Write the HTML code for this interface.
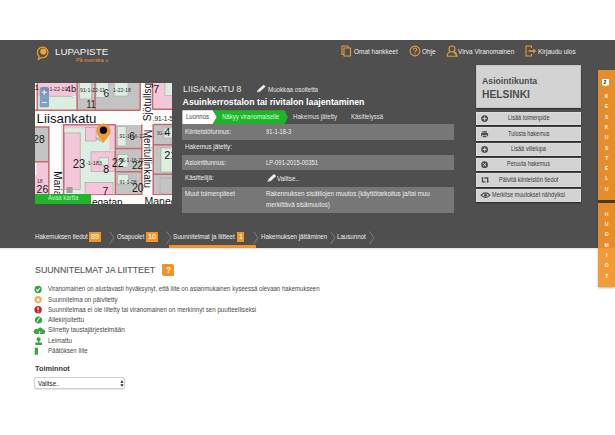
<!DOCTYPE html>
<html><head><meta charset="utf-8"><style>
html,body{margin:0;padding:0;background:#fff;}
body{width:615px;height:435px;position:relative;overflow:hidden;font-family:"Liberation Sans",sans-serif;}
.t{position:absolute;white-space:nowrap;line-height:1;}
.r{position:absolute;}
svg text{font-family:"Liberation Sans",sans-serif;}
</style></head><body>
<div class="r" style="left:0.00px;top:40.00px;width:615.00px;height:207.50px;background:#4f4f4f;"></div>
<div class="r" style="left:0.00px;top:247.50px;width:615.00px;height:2.00px;background:linear-gradient(rgba(0,0,0,0.12),rgba(0,0,0,0));"></div>
<svg class="r" style="left:36px;top:44px" width="14" height="17" viewBox="0 0 14 17">
<path d="M3.2 12.4 A5.3 5.3 0 1 1 5.6 13.6 L2.2 15.6 Z" fill="none" stroke="#eea12e" stroke-width="1.2" stroke-linejoin="round"/>
<circle cx="7.3" cy="7.6" r="3.1" fill="#f3a32c"/>
</svg>
<div class="t" id="logo" style="left:54.50px;top:47.22px;font-size:9.90px;color:#f4f4f4;transform:scaleX(0.9919);transform-origin:0 0;">LUPAPISTE</div>
<div class="t" id="sv" style="left:75.60px;top:57.32px;font-size:6.00px;color:#e8913a;transform:scaleX(0.8939);transform-origin:0 0;">På svenska »</div>
<svg class="r" style="left:341px;top:45px" width="12" height="12" viewBox="0 0 12 12">
<path d="M1 1 H7 V9.5 H1 Z" fill="none" stroke="#e39a3c" stroke-width="1.1"/>
<path d="M3 3 H9.5 V11 H3 Z" fill="#4f4f4f" stroke="#e39a3c" stroke-width="1.1"/>
</svg>
<div class="t" id="nav1" style="left:354.20px;top:47.83px;font-size:7.40px;color:#eeeeee;transform:scaleX(0.8728);transform-origin:0 0;">Omat hankkeet</div>
<svg class="r" style="left:409px;top:44.5px" width="12" height="12" viewBox="0 0 12 12">
<circle cx="6" cy="6" r="4.9" fill="none" stroke="#e39a3c" stroke-width="1.1"/>
<path d="M4.3 4.6 Q4.4 3 6 3 Q7.7 3 7.7 4.5 Q7.7 5.5 6.6 6 Q6 6.3 6 7.3" fill="none" stroke="#e39a3c" stroke-width="1.1"/>
<circle cx="6" cy="8.8" r="0.7" fill="#e39a3c"/>
</svg>
<div class="t" id="nav2" style="left:421.60px;top:47.83px;font-size:7.40px;color:#eeeeee;transform:scaleX(0.8700);transform-origin:0 0;">Ohje</div>
<svg class="r" style="left:446px;top:44.5px" width="12" height="12" viewBox="0 0 12 12">
<circle cx="6" cy="4" r="3" fill="none" stroke="#e39a3c" stroke-width="1.1"/>
<path d="M1 11.2 Q1.5 7.4 4.3 6.8 M7.7 6.8 Q10.5 7.4 11 11.2 Z M1 11.2 H11" fill="none" stroke="#e39a3c" stroke-width="1.1"/>
</svg>
<div class="t" id="nav3" style="left:457.70px;top:47.83px;font-size:7.40px;color:#eeeeee;transform:scaleX(0.8754);transform-origin:0 0;">Virva Viranomainen</div>
<svg class="r" style="left:525px;top:45px" width="12" height="12" viewBox="0 0 12 12">
<path d="M6.5 3.2 V1 H1 V11 H6.5 V8.8" fill="none" stroke="#e39a3c" stroke-width="1.1"/>
<path d="M3.5 6 H9" stroke="#e39a3c" stroke-width="1.6"/>
<path d="M8.2 3.5 L11.2 6 L8.2 8.5 Z" fill="#e39a3c"/>
</svg>
<div class="t" id="nav4" style="left:537.70px;top:47.83px;font-size:7.40px;color:#eeeeee;transform:scaleX(0.8812);transform-origin:0 0;">Kirjaudu ulos</div>
<svg class="r" style="left:35px;top:83px" width="137" height="121" viewBox="35 83 137 121"><rect x="35" y="83" width="137.00" height="121.00" fill="#fcfcfc"/><rect x="37.3" y="83" width="39.70" height="13.20" fill="#f3c6d9"/><rect x="37.3" y="96.2" width="39.70" height="14.00" fill="#dcede1"/><path d="M49 96.3 H71 L73 98" stroke="#a8a8a8" stroke-width="0.8" fill="none"/><rect x="77" y="83" width="63.20" height="27.20" fill="#c3c3c3"/><rect x="79.7" y="82" width="11.70" height="17.00" fill="#dcede1" stroke="#a8a8a8" stroke-width="0.6"/><rect x="96" y="82" width="12.50" height="15.50" fill="#dcede1" stroke="#a8a8a8" stroke-width="0.6"/><rect x="114.2" y="82" width="13.80" height="14.00" fill="#dcede1" stroke="#a8a8a8" stroke-width="0.6"/><rect x="152.5" y="83" width="19.50" height="26.30" fill="#f3c6d9"/><rect x="165" y="82" width="8.00" height="13.60" fill="#dcede1" stroke="#a8a8a8" stroke-width="0.6"/><path d="M35 110.3 H140.2 M152.5 109.3 H172 M37.3 83 V110.3 M77.1 83 V110.3 M95.1 83 V110.3 M140.2 83 V110.3 M152.5 83 V109.3" stroke="#c66a70" stroke-width="1.5" fill="none"/><rect x="35" y="127" width="14.20" height="34.80" fill="#c3c3c3"/><rect x="35" y="161.8" width="14.20" height="33.20" fill="#f3c6d9"/><rect x="35" y="161" width="1.50" height="14.00" fill="#f4f4f4"/><rect x="64.3" y="125.4" width="50.60" height="69.60" fill="#dcede1"/><rect x="64.3" y="125.4" width="50.60" height="2.90" fill="#f3c6d9"/><rect x="64.3" y="133" width="15.90" height="56.50" fill="#f3c6d9" stroke="#a8a8a8" stroke-width="0.7"/><rect x="85.4" y="127.5" width="10.70" height="13.50" fill="#f3c6d9" stroke="#a8a8a8" stroke-width="0.7"/><rect x="109.3" y="125.4" width="5.60" height="24.60" fill="#f3c6d9"/><rect x="91" y="151.8" width="23.90" height="19.80" fill="#f3c6d9" stroke="#a8a8a8" stroke-width="0.7"/><rect x="99" y="157.6" width="9.70" height="7.40" fill="#dcede1" stroke="#a8a8a8" stroke-width="0.6"/><rect x="85.1" y="182.6" width="27.90" height="12.50" fill="#f3c6d9" stroke="#a8a8a8" stroke-width="0.7"/><rect x="66.6" y="187" width="6.00" height="6.00" fill="#9e9e9e"/><rect x="116" y="125" width="25.80" height="69.80" fill="#c3c3c3"/><rect x="117.2" y="126.5" width="8.80" height="19.50" fill="#dcede1" stroke="#a8a8a8" stroke-width="0.6"/><rect x="117.6" y="154.6" width="10.40" height="12.60" fill="#dcede1" stroke="#a8a8a8" stroke-width="0.6"/><rect x="117.6" y="174.7" width="11.00" height="9.80" fill="#dcede1" stroke="#a8a8a8" stroke-width="0.6"/><rect x="153.2" y="124.5" width="18.80" height="70.30" fill="#c3c3c3"/><rect x="164" y="128" width="9.00" height="10.00" fill="#dcede1" stroke="#a8a8a8" stroke-width="0.6"/><rect x="161" y="148" width="12.00" height="24.00" fill="#dcede1" stroke="#a8a8a8" stroke-width="0.6"/><rect x="160" y="178" width="13.00" height="16.00" fill="#c3c3c3" stroke="#a8a8a8" stroke-width="0.6"/><path d="M35 126.9 H49.5 M48.8 126 V195 M35 161.8 H49.2 M63.6 124 V195 M64 124.7 H115.5 M115.4 124.5 V195 M141.8 124.5 V195 M116 148.5 H141.8 M116 171.8 H141.8 M116 194.8 H141.8 M153.2 124 V195 M153.2 124.6 H172 M153.2 144.8 H172 M153.2 174.3 H172 M153.2 194.8 H172 M64 195 H115" stroke="#c66a70" stroke-width="1.5" fill="none"/><path d="M62 124 V195" stroke="#d8d8d8" stroke-width="1"/><text x="36.6" y="122.5" font-size="13.3" fill="#141414" >Liisankatu</text><text x="34.6" y="90" font-size="8" fill="#222" >1</text><text x="42" y="91" font-size="5.2" fill="#333" >91-1-22-10</text><text x="65.8" y="91.8" font-size="9.2" fill="#1a1a1a" >4b</text><text x="80" y="92.3" font-size="5.2" fill="#333" >91-1-22-11</text><text transform="translate(103.5,96.8) scale(0.9,1)" font-size="11" fill="#222" >6</text><text x="113" y="92.3" font-size="5.2" fill="#333" >1-22-18</text><text transform="translate(86.5,108.1) scale(0.75,1)" font-size="11.5" fill="#1a1a1a" >11</text><text x="153.2" y="92.6" font-size="10.8" fill="#1a1a1a" >7</text><text x="152.6" y="121" font-size="6.5" fill="#1a1a1a" >.91-1-5</text><text transform="translate(33.2,143.4) scale(0.88,1)" font-size="11.8" fill="#1a1a1a" >28</text><text x="37" y="183.2" font-size="5" fill="#333" >18</text><text transform="translate(36.6,192.6) scale(0.92,1)" font-size="11.4" fill="#1a1a1a" >26</text><text transform="translate(72.8,168) scale(0.9,1)" font-size="12.4" fill="#1a1a1a" >23</text><text x="86" y="165" font-size="5.5" fill="#333" >-1-183</text><text x="103.3" y="173.2" font-size="10.5" fill="#1a1a1a" >8</text><text transform="translate(111.8,167.2) scale(0.88,1)" font-size="12" fill="#1a1a1a" >22</text><text transform="translate(131.9,169) scale(0.85,1)" font-size="11.5" fill="#1a1a1a" >22</text><text transform="translate(131.9,192.2) scale(0.88,1)" font-size="12" fill="#1a1a1a" >20</text><text x="102.6" y="195.1" font-size="10.5" fill="#1a1a1a" >7</text><text transform="translate(129.2,140.3) scale(0.9,1)" font-size="11.5" fill="#1a1a1a" >6</text><text x="118" y="138" font-size="5.2" fill="#333" >.91-1-16-12</text><text x="118" y="162" font-size="5" fill="#333" >.91-1-16-22</text><text x="118" y="183.8" font-size="5" fill="#333" >.91-1-28</text><text x="164.2" y="136" font-size="11" fill="#1a1a1a" >4</text><text x="157" y="135" font-size="5" fill="#333" >91-1-</text><text x="164.2" y="158.6" font-size="11" fill="#1a1a1a" >21</text><text x="0" y="0" font-size="10.2" fill="#141414" transform="translate(150.8,121.3) rotate(-90)">Sjötullsg</text><text x="0" y="0" font-size="10.2" fill="#141414" transform="translate(143.8,129.8) rotate(90) scale(0.97,1)">Meritullinkatu</text><text x="0" y="0" font-size="10" fill="#141414" transform="translate(54,171.3) rotate(90)">Maria</text><rect x="35" y="195.2" width="137.00" height="8.80" fill="#fcfcfc"/><text x="92" y="206" font-size="10" fill="#141414" >egatan</text><text x="144.5" y="205.2" font-size="10.5" fill="#141414" >Manee</text><rect x="39.7" y="87.3" width="9.3" height="19.9" rx="1.3" fill="#5f84bb" opacity="0.75"/><path d="M44.3 89.8 V94.8 M41.8 92.3 H46.8 M41.8 102.5 H46.8" stroke="#f4f6fb" stroke-width="1.1"/><path d="M103.4 143.2 L95.5 139 Q97 136.5 99 137.2 Z" fill="#6a4a70" opacity="0.3"/><path d="M103.4 142.9 C98.5 136.5 96.2 133.8 96.2 130.8 A7.2 7.2 0 0 1 110.6 130.8 C110.6 133.8 108.3 136.5 103.4 142.9 Z" fill="#f29a30"/><circle cx="103.4" cy="130.2" r="3.7" fill="#0d0d0d"/></svg>
<div class="r" style="left:34.80px;top:193.70px;width:56.20px;height:10.20px;background:#1eb52a;"></div>
<div class="t" id="avaa" style="left:47.60px;top:195.40px;font-size:6.50px;color:#c8f7c8;transform:scaleX(0.9279);transform-origin:0 0;">Avaa kartta</div>
<div class="t" id="title" style="left:182.60px;top:83.96px;font-size:9.50px;color:#e6e6e6;transform:scaleX(0.9337);transform-origin:0 0;">LIISANKATU 8</div>
<svg class="r" style="left:256px;top:83.5px" width="11" height="9" viewBox="0 0 11 9">
<path d="M1 8.3 L1.6 6.2 L7.6 0.8 L9.6 2.6 L3.6 8 Z" fill="#f2f2f2"/>
<path d="M1.6 6.2 L3.6 8" stroke="#4f4f4f" stroke-width="0.6"/>
</svg>
<div class="t" id="muok" style="left:268.20px;top:86.58px;font-size:6.40px;color:#e6e6e6;transform:scaleX(0.9645);transform-origin:0 0;">Muokkaa osoitetta</div>
<div class="t" id="op" style="left:182.60px;top:97.99px;font-size:8.75px;color:#ffffff;font-weight:bold;">Asuinkerrostalon tai rivitalon laajentaminen</div>
<svg class="r" style="left:181.5px;top:110px" width="200" height="14" viewBox="181.5 110 200 14">
<path d="M181.9 110.2 H212.3 L216.4 117.1 L212.3 124 H181.9 Z" fill="#ffffff"/>
<path d="M212.3 110.2 H284.1 L287.4 117.1 L284.1 124 H212.3 L216.4 117.1 Z" fill="#1eb52a"/>
</svg>
<div class="t" id="tab1" style="left:185.80px;top:114.01px;font-size:6.60px;color:#444;transform:scaleX(0.9082);transform-origin:0 0;">Luonnos</div>
<div class="t" id="tab2" style="left:222.40px;top:114.01px;font-size:6.60px;color:#d6f8d6;transform:scaleX(0.9173);transform-origin:0 0;">Näkyy viranomaiselle</div>
<div class="t" id="tab3" style="left:293.00px;top:114.01px;font-size:6.60px;color:#e0e0e0;transform:scaleX(0.9341);transform-origin:0 0;">Hakemus jätetty</div>
<div class="t" id="tab4" style="left:350.80px;top:114.01px;font-size:6.60px;color:#e0e0e0;transform:scaleX(0.9144);transform-origin:0 0;">Käsittelyssä</div>
<div class="r" style="left:181.60px;top:124.20px;width:272.20px;height:15.50px;background:#777777;"></div>
<div class="r" style="left:181.60px;top:154.90px;width:272.20px;height:15.40px;background:#777777;"></div>
<div class="r" style="left:181.60px;top:186.80px;width:272.20px;height:26.20px;background:#777777;"></div>
<div class="t" style="left:184.90px;top:128.60px;font-size:6.50px;color:#eeeeee;transform:scaleX(0.9686);transform-origin:0 0;">Kiinteistötunnus:</div>
<div class="t" style="left:184.90px;top:144.30px;font-size:6.50px;color:#eeeeee;transform:scaleX(0.9686);transform-origin:0 0;">Hakemus jätetty:</div>
<div class="t" style="left:184.90px;top:159.70px;font-size:6.50px;color:#eeeeee;transform:scaleX(0.9686);transform-origin:0 0;">Asiointitunnus:</div>
<div class="t" style="left:184.90px;top:175.30px;font-size:6.50px;color:#eeeeee;transform:scaleX(0.9686);transform-origin:0 0;">Käsittelijä:</div>
<div class="t" style="left:184.90px;top:191.40px;font-size:6.50px;color:#eeeeee;transform:scaleX(0.9686);transform-origin:0 0;">Muut toimenpiteet</div>
<div class="t" style="left:265.90px;top:128.60px;font-size:6.50px;color:#eeeeee;transform:scaleX(0.8976);transform-origin:0 0;">91-1-18-3</div>
<div class="t" style="left:265.90px;top:159.70px;font-size:6.50px;color:#eeeeee;transform:scaleX(0.9010);transform-origin:0 0;">LP-091-2015-00351</div>
<svg class="r" style="left:266.5px;top:173px" width="10" height="9.5" viewBox="0 0 10 9.5">
<path d="M0.5 8.8 L1.1 6.6 L7 1 L9.2 3 L3.2 8.6 Z" fill="#f2f2f2"/>
<path d="M1.1 6.6 L3.2 8.6" stroke="#4f4f4f" stroke-width="0.6"/>
</svg>
<div class="t" id="valitse" style="left:276.60px;top:176.10px;font-size:6.50px;color:#eeeeee;transform:scaleX(0.9718);transform-origin:0 0;">Valitse..</div>
<div class="t" id="rak1" style="left:265.90px;top:191.40px;font-size:6.50px;color:#eeeeee;transform:scaleX(0.9687);transform-origin:0 0;">Rakennuksen sisätilojen muutos (käyttötarkoitus ja/tai muu</div>
<div class="t" id="rak2" style="left:265.90px;top:201.50px;font-size:6.50px;color:#eeeeee;transform:scaleX(0.9547);transform-origin:0 0;">merkittävä sisämuutos)</div>
<div class="r" style="left:475.90px;top:64.50px;width:105.10px;height:43.80px;background:#d3d3d3;box-shadow:inset 0 0 0 0.8px #c2c2c2, 0 1px 1.5px rgba(0,0,0,0.45);"></div>
<div class="t" id="asi" style="left:481.60px;top:76.52px;font-size:8.60px;color:#4d4d4d;font-weight:bold;transform:scaleX(1.0134);transform-origin:0 0;">Asiointikunta</div>
<div class="t" id="hel" style="left:481.60px;top:88.72px;font-size:11.20px;color:#4d4d4d;font-weight:bold;transform:scaleX(0.9183);transform-origin:0 0;">HELSINKI</div>
<div class="r" style="left:475.90px;top:111.80px;width:105.10px;height:13.60px;background:#d3d3d3;box-shadow:inset 0 0 0 0.7px #e0e0e0, 0 1px 1.2px rgba(0,0,0,0.55);"></div>
<div class="t" style="left:507.75px;top:115.37px;font-size:6.30px;color:#3a3a3a;transform:scaleX(0.8712);transform-origin:0 0;">Lisää toimenpide</div>
<div class="r" style="left:475.90px;top:127.30px;width:105.10px;height:13.60px;background:#d3d3d3;box-shadow:inset 0 0 0 0.7px #e0e0e0, 0 1px 1.2px rgba(0,0,0,0.55);"></div>
<div class="t" style="left:507.75px;top:130.87px;font-size:6.30px;color:#3a3a3a;transform:scaleX(0.8693);transform-origin:0 0;">Tulosta hakemus</div>
<div class="r" style="left:475.90px;top:142.60px;width:105.10px;height:13.60px;background:#d3d3d3;box-shadow:inset 0 0 0 0.7px #e0e0e0, 0 1px 1.2px rgba(0,0,0,0.55);"></div>
<div class="t" style="left:511.05px;top:146.17px;font-size:6.30px;color:#3a3a3a;transform:scaleX(0.8741);transform-origin:0 0;">Lisää viitelupa</div>
<div class="r" style="left:475.90px;top:157.90px;width:105.10px;height:13.60px;background:#d3d3d3;box-shadow:inset 0 0 0 0.7px #e0e0e0, 0 1px 1.2px rgba(0,0,0,0.55);"></div>
<div class="t" style="left:507.05px;top:161.47px;font-size:6.30px;color:#3a3a3a;transform:scaleX(0.8688);transform-origin:0 0;">Peruuta hakemus</div>
<div class="r" style="left:475.90px;top:173.30px;width:105.10px;height:13.60px;background:#d3d3d3;box-shadow:inset 0 0 0 0.7px #e0e0e0, 0 1px 1.2px rgba(0,0,0,0.55);"></div>
<div class="t" style="left:498.80px;top:176.87px;font-size:6.30px;color:#3a3a3a;transform:scaleX(0.9022);transform-origin:0 0;">Päivitä kiinteistön tiedot</div>
<div class="r" style="left:475.90px;top:188.90px;width:105.10px;height:13.60px;background:#d3d3d3;box-shadow:inset 0 0 0 0.7px #e0e0e0, 0 1px 1.2px rgba(0,0,0,0.55);"></div>
<div class="t" style="left:492.00px;top:192.47px;font-size:6.30px;color:#3a3a3a;transform:scaleX(0.8834);transform-origin:0 0;">Merkitse muutokset nähdyiksi</div>
<svg class="r" style="left:479px;top:111px" width="12" height="92" viewBox="479 111 12 92">
<circle cx="484.6" cy="118.6" r="3.4" fill="#4e4e4e"/><path d="M484.6 116.6 V120.6 M482.6 118.6 H486.6" stroke="#d3d3d3" stroke-width="1"/>
<path d="M482.2 132.6 H487 V131.2 H482.2 Z" fill="#4e4e4e"/><rect x="481.1" y="133.1" width="7" height="3.2" rx="0.6" fill="#4e4e4e"/><rect x="482.5" y="135.3" width="4.2" height="2.3" fill="#4e4e4e" stroke="#d3d3d3" stroke-width="0.6"/>
<circle cx="484.6" cy="149.4" r="3.4" fill="#4e4e4e"/><path d="M484.6 147.4 V151.4 M482.6 149.4 H486.6" stroke="#d3d3d3" stroke-width="1"/>
<circle cx="484.6" cy="164.7" r="3.4" fill="#4e4e4e"/><path d="M483.2 163.3 L486 166.1 M486 163.3 L483.2 166.1" stroke="#d3d3d3" stroke-width="1"/>
<path d="M482.5 177.2 V181.9 H485.6" stroke="#4e4e4e" stroke-width="1.3" fill="none"/><path d="M484.4 178 H487.7 V182.3" stroke="#4e4e4e" stroke-width="1.3" fill="none"/><path d="M481.3 178.6 L482.5 176.9 L483.7 178.6 Z M486.5 181.4 L487.7 183.1 L488.9 181.4 Z" fill="#4e4e4e"/>
<path d="M481.1 195.2 Q485.5 190.6 490 195.2 Q485.5 199.8 481.1 195.2 Z" fill="none" stroke="#4e4e4e" stroke-width="1.2"/><circle cx="485.5" cy="195.2" r="1.5" fill="#4e4e4e"/>
</svg>
<div class="r" style="left:597.80px;top:70.20px;width:17.20px;height:216.80px;background:rgba(240,146,40,0.93);box-shadow:-0.5px 1px 2px rgba(0,0,0,0.3);"></div>
<div class="r" style="left:597.80px;top:200.00px;width:17.20px;height:2.60px;background:rgba(60,45,35,0.9);"></div>
<svg class="r" style="left:601px;top:78px" width="9" height="10" viewBox="0 0 9 10">
<path d="M1.6 1 H7.4 Q8 1 8 1.6 V6.8 Q8 7.4 7.4 7.4 H5.2 L4.5 8.8 L3.8 7.4 H1.6 Q1 7.4 1 6.8 V1.6 Q1 1 1.6 1 Z" fill="#ffffff"/>
</svg>
<div class="t" style="left:603.60px;top:80.20px;font-size:5.20px;color:#222222;font-weight:bold;">2</div>
<div class="t" style="left:602.2px;width:9px;text-align:center;top:94.10px;font-size:5.1px;font-weight:bold;color:#fff3e6">K</div>
<div class="t" style="left:602.2px;width:9px;text-align:center;top:104.38px;font-size:5.1px;font-weight:bold;color:#fff3e6">E</div>
<div class="t" style="left:602.2px;width:9px;text-align:center;top:114.66px;font-size:5.1px;font-weight:bold;color:#fff3e6">S</div>
<div class="t" style="left:602.2px;width:9px;text-align:center;top:124.94px;font-size:5.1px;font-weight:bold;color:#fff3e6">K</div>
<div class="t" style="left:602.2px;width:9px;text-align:center;top:135.22px;font-size:5.1px;font-weight:bold;color:#fff3e6">U</div>
<div class="t" style="left:602.2px;width:9px;text-align:center;top:145.50px;font-size:5.1px;font-weight:bold;color:#fff3e6">S</div>
<div class="t" style="left:602.2px;width:9px;text-align:center;top:155.78px;font-size:5.1px;font-weight:bold;color:#fff3e6">T</div>
<div class="t" style="left:602.2px;width:9px;text-align:center;top:166.06px;font-size:5.1px;font-weight:bold;color:#fff3e6">E</div>
<div class="t" style="left:602.2px;width:9px;text-align:center;top:176.34px;font-size:5.1px;font-weight:bold;color:#fff3e6">L</div>
<div class="t" style="left:602.2px;width:9px;text-align:center;top:186.62px;font-size:5.1px;font-weight:bold;color:#fff3e6">U</div>
<div class="t" style="left:602.2px;width:9px;text-align:center;top:211.70px;font-size:5.1px;font-weight:bold;color:#fff3e6">H</div>
<div class="t" style="left:602.2px;width:9px;text-align:center;top:222.00px;font-size:5.1px;font-weight:bold;color:#fff3e6">U</div>
<div class="t" style="left:602.2px;width:9px;text-align:center;top:232.30px;font-size:5.1px;font-weight:bold;color:#fff3e6">O</div>
<div class="t" style="left:602.2px;width:9px;text-align:center;top:242.60px;font-size:5.1px;font-weight:bold;color:#fff3e6">M</div>
<div class="t" style="left:602.2px;width:9px;text-align:center;top:252.90px;font-size:5.1px;font-weight:bold;color:#fff3e6">I</div>
<div class="t" style="left:602.2px;width:9px;text-align:center;top:263.20px;font-size:5.1px;font-weight:bold;color:#fff3e6">O</div>
<div class="t" style="left:602.2px;width:9px;text-align:center;top:273.50px;font-size:5.1px;font-weight:bold;color:#fff3e6">T</div>
<div class="t" id="s1" style="left:34.60px;top:233.17px;font-size:7.00px;color:#eeeeee;transform:scaleX(0.8795);transform-origin:0 0;">Hakemuksen tiedot</div>
<div class="t" id="s2" style="left:116.70px;top:233.17px;font-size:7.00px;color:#eeeeee;transform:scaleX(0.8555);transform-origin:0 0;">Osapuolet</div>
<div class="t" id="s3" style="left:173.20px;top:233.17px;font-size:7.00px;color:#eeeeee;transform:scaleX(0.9024);transform-origin:0 0;">Suunnitelmat ja liitteet</div>
<div class="t" id="s4" style="left:261.00px;top:233.17px;font-size:7.00px;color:#eeeeee;transform:scaleX(0.8816);transform-origin:0 0;">Hakemuksen jättäminen</div>
<div class="t" id="s5" style="left:337.10px;top:233.17px;font-size:7.00px;color:#eeeeee;transform:scaleX(0.8808);transform-origin:0 0;">Lausunnot</div>
<div class="r" style="left:88.70px;top:232.30px;width:12.50px;height:9.30px;background:#ee952c;"></div>
<div class="t" style="left:90.85px;top:233.81px;font-size:6.60px;color:#ffffff;transform:scaleX(1.1169);transform-origin:0 0;">89</div>
<div class="r" style="left:145.80px;top:232.30px;width:12.50px;height:9.30px;background:#ee952c;"></div>
<div class="t" style="left:147.95px;top:233.81px;font-size:6.60px;color:#ffffff;transform:scaleX(1.1169);transform-origin:0 0;">10</div>
<div class="r" style="left:236.90px;top:232.30px;width:7.30px;height:9.30px;background:#ee952c;"></div>
<div class="t" style="left:238.50px;top:233.81px;font-size:6.60px;color:#ffffff;transform:scaleX(1.1169);transform-origin:0 0;">1</div>
<svg class="r" style="left:108.50px;top:230.5px" width="6" height="13.5" viewBox="0 0 6 13.5"><path d="M0.6 0.5 L5 6.75 L0.6 13" fill="none" stroke="#8a8a8a" stroke-width="0.8"/></svg>
<svg class="r" style="left:165.80px;top:230.5px" width="6" height="13.5" viewBox="0 0 6 13.5"><path d="M0.6 0.5 L5 6.75 L0.6 13" fill="none" stroke="#8a8a8a" stroke-width="0.8"/></svg>
<svg class="r" style="left:253.20px;top:230.5px" width="6" height="13.5" viewBox="0 0 6 13.5"><path d="M0.6 0.5 L5 6.75 L0.6 13" fill="none" stroke="#8a8a8a" stroke-width="0.8"/></svg>
<svg class="r" style="left:329.60px;top:230.5px" width="6" height="13.5" viewBox="0 0 6 13.5"><path d="M0.6 0.5 L5 6.75 L0.6 13" fill="none" stroke="#8a8a8a" stroke-width="0.8"/></svg>
<svg class="r" style="left:368.60px;top:230.5px" width="6" height="13.5" viewBox="0 0 6 13.5"><path d="M0.6 0.5 L5 6.75 L0.6 13" fill="none" stroke="#8a8a8a" stroke-width="0.8"/></svg>
<div class="r" style="left:168.70px;top:245.00px;width:86.90px;height:2.50px;background:#f0932b;"></div>
<div class="t" id="h2" style="left:35.10px;top:266.21px;font-size:9.20px;color:#555555;transform:scaleX(0.9600);transform-origin:0 0;-webkit-text-stroke:0.12px #555;">SUUNNITELMAT JA LIITTEET</div>
<div class="r" style="left:162.00px;top:263.70px;width:12.10px;height:12.70px;background:#f0952d;border-radius:0 2px 0 2px;"></div>
<div class="t" style="left:165.60px;top:265.92px;font-size:8.60px;color:#fff2d0;font-weight:bold;transform:scaleX(0.9518);transform-origin:0 0;">?</div>
<div class="t" style="left:47.60px;top:286.24px;font-size:6.80px;color:#4a4a4a;transform:scaleX(0.8899);transform-origin:0 0;">Viranomainen on alustavasti hyväksynyt, että liite on asianmukainen kyseessä olevaan hakemukseen</div>
<div class="t" style="left:47.60px;top:296.54px;font-size:6.80px;color:#4a4a4a;transform:scaleX(0.9173);transform-origin:0 0;">Suunnitelma on päivitetty</div>
<div class="t" style="left:47.60px;top:306.74px;font-size:6.80px;color:#4a4a4a;transform:scaleX(0.9094);transform-origin:0 0;">Suunnitelmaa ei ole liitetty tai viranomainen on merkinnyt sen puutteelliseksi</div>
<div class="t" style="left:47.60px;top:316.94px;font-size:6.80px;color:#4a4a4a;transform:scaleX(0.9364);transform-origin:0 0;">Allekirjoitettu</div>
<div class="t" style="left:47.60px;top:327.34px;font-size:6.80px;color:#4a4a4a;transform:scaleX(0.9141);transform-origin:0 0;">Siirretty taustajärjestelmään</div>
<div class="t" style="left:47.60px;top:337.74px;font-size:6.80px;color:#4a4a4a;transform:scaleX(0.9202);transform-origin:0 0;">Leimattu</div>
<div class="t" style="left:47.60px;top:348.24px;font-size:6.80px;color:#4a4a4a;transform:scaleX(0.8954);transform-origin:0 0;">Päätöksen liite</div>
<svg class="r" style="left:33px;top:284px" width="14" height="74" viewBox="33 284 14 74">
<circle cx="38.1" cy="289.4" r="3.6" fill="#3aa545"/><path d="M36.2 289.5 L37.6 291 L40 288" stroke="#fff" stroke-width="1.1" fill="none"/>
<circle cx="38.1" cy="299.6" r="3.6" fill="#ecae4c"/><path d="M38.1 297.2 L38.75 298.9 L40.5 299 L39.2 300.1 L39.6 301.9 L38.1 300.9 L36.6 301.9 L37 300.1 L35.7 299 L37.45 298.9 Z" fill="#fff" opacity="0.9"/>
<circle cx="38.1" cy="309.7" r="3.7" fill="#c9202a"/><path d="M38.1 307.3 V310.2" stroke="#fff" stroke-width="1.2"/><circle cx="38.1" cy="311.8" r="0.65" fill="#fff"/>
<circle cx="38.5" cy="320" r="3.6" fill="#3aa545"/><path d="M36.9 322.2 Q37.4 319 40.3 317.6" stroke="#fff" stroke-width="1" fill="none"/>
<path d="M35.2 334 H43.2 A2.2 2.2 0 0 0 42.9 329.6 A2.8 2.8 0 0 0 37.6 329.2 A2.4 2.4 0 0 0 35.2 334 Z" fill="#3aa545"/><path d="M39.6 334 V331.6 M38.5 332.5 L39.6 331.4 L40.7 332.5" stroke="#fff" stroke-width="0.7" fill="none"/>
<circle cx="38.6" cy="339.2" r="2" fill="#3aa545"/><path d="M37.9 340.6 V342.4 H35.3 V344.9 H42 V342.4 H39.4 V340.6 Z" fill="#3aa545"/>
<path d="M34.7 347.8 H38 V355.6 L36.35 354.2 L34.7 355.6 Z" fill="#3aa545"/>
</svg>
<div class="t" id="toim" style="left:35.40px;top:365.20px;font-size:7.80px;color:#3a3a3a;font-weight:bold;transform:scaleX(0.9377);transform-origin:0 0;">Toiminnot</div>
<div class="r" style="left:34.30px;top:377.40px;width:91.20px;height:11.90px;background:#ffffff;border:0.7px solid #cfcfcf;border-radius:2.5px;box-sizing:border-box;box-shadow:0 0.5px 1px rgba(0,0,0,0.1);"></div>
<div class="t" id="sel" style="left:37.80px;top:381.00px;font-size:6.50px;color:#222222;transform:scaleX(0.9497);transform-origin:0 0;">Valitse..</div>
<svg class="r" style="left:119.5px;top:380px" width="4" height="7" viewBox="0 0 4 7"><path d="M2 0.3 L3.6 2.8 H0.4 Z M2 6.7 L3.6 4.2 H0.4 Z" fill="#222"/></svg>
</body></html>
